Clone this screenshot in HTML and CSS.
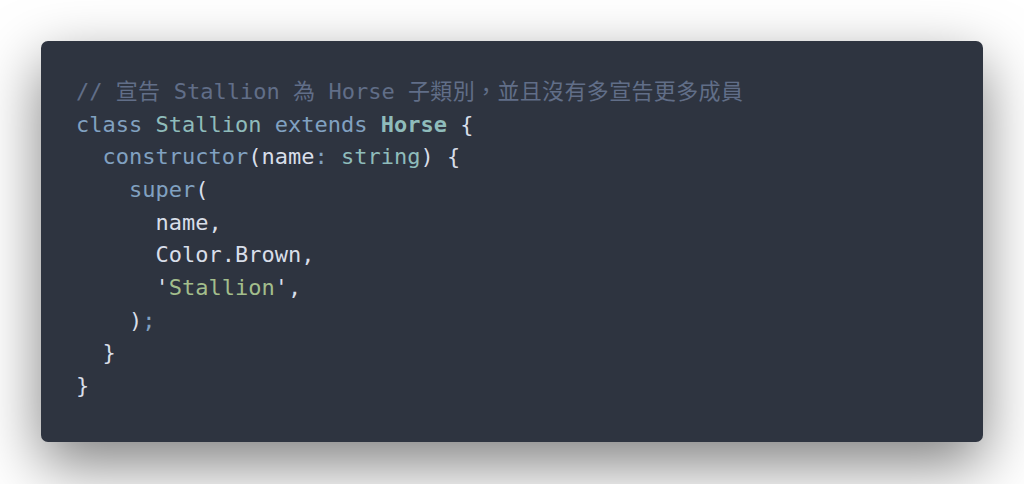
FILE: index.html
```html
<!DOCTYPE html>
<html>
<head>
<meta charset="utf-8">
<link rel="stylesheet" href="styles.css">
</head>
<body>
<div class="card">
<pre class="code"><span class="cm">// <span class="cjk">宣告</span> Stallion <span class="cjk">為</span> Horse <span class="cjk">子類別，並且沒有多宣告更多成員</span></span>
<span class="kw">class</span> <span class="cls">Stallion</span> <span class="kw">extends</span> <span class="cls bold">Horse</span> {
  <span class="kw">constructor</span>(name<span class="kw">:</span> <span class="cls">string</span>) {
    <span class="kw">super</span>(
      name,
      Color.Brown,
      '<span class="str">Stallion</span>',
    )<span class="kw">;</span>
  }
}</pre>
</div>
</body>
</html>
```
FILE: styles.css
```css
html, body {
  margin: 0;
  padding: 0;
  background: #ffffff;
}
body {
  padding: 41px 41px 0 41px;
  height: 484px;
  box-sizing: border-box;
  overflow: hidden;
}
.card {
  width: 942px;
  height: 401px;
  box-sizing: border-box;
  background: #2e3440;
  border-radius: 7px;
  padding: 35px 35px 0 35px;
  box-shadow: 0 22px 60px rgba(0, 0, 0, 0.5);
}
.code {
  margin: 0;
  font-family: "DejaVu Sans Mono", "Noto Sans CJK TC", monospace;
  font-size: 22px;
  line-height: 32.67px;
  color: #d8dee9;
}
.cjk {
  font-family: "Noto Sans CJK TC", sans-serif;
  letter-spacing: 0.35px;
  line-height: 1;
}
.cm { color: #616e88; }
.kw { color: #81a1c1; }
.cls { color: #8fbcbb; }
.bold { font-weight: bold; }
.str { color: #a3be8c; }
```
